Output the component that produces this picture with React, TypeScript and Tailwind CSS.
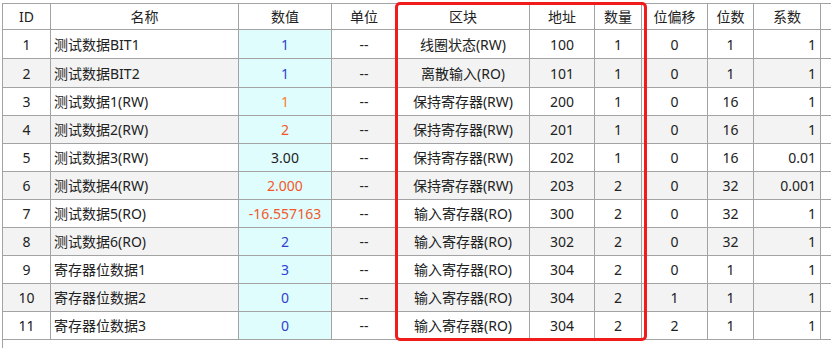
import React from 'react';

type Row = {
  id: number;
  name: string;
  value: string;
  color: string;
  block: string;
  addr: number;
  count: number;
  offset: number;
  bits: number;
  factor: string;
};

const rows: Row[] = [
  { id: 1, name: '测试数据BIT1', value: '1', color: 'text-[#2f3fd0]', block: '线圈状态(RW)', addr: 100, count: 1, offset: 0, bits: 1, factor: '1' },
  { id: 2, name: '测试数据BIT2', value: '1', color: 'text-[#2f3fd0]', block: '离散输入(RO)', addr: 101, count: 1, offset: 0, bits: 1, factor: '1' },
  { id: 3, name: '测试数据1(RW)', value: '1', color: 'text-[#f5802a]', block: '保持寄存器(RW)', addr: 200, count: 1, offset: 0, bits: 16, factor: '1' },
  { id: 4, name: '测试数据2(RW)', value: '2', color: 'text-[#f3582c]', block: '保持寄存器(RW)', addr: 201, count: 1, offset: 0, bits: 16, factor: '1' },
  { id: 5, name: '测试数据3(RW)', value: '3.00', color: 'text-[#1e1e1e]', block: '保持寄存器(RW)', addr: 202, count: 1, offset: 0, bits: 16, factor: '0.01' },
  { id: 6, name: '测试数据4(RW)', value: '2.000', color: 'text-[#f3582c]', block: '保持寄存器(RW)', addr: 203, count: 2, offset: 0, bits: 32, factor: '0.001' },
  { id: 7, name: '测试数据5(RO)', value: '-16.557163', color: 'text-[#f3582c]', block: '输入寄存器(RO)', addr: 300, count: 2, offset: 0, bits: 32, factor: '1' },
  { id: 8, name: '测试数据6(RO)', value: '2', color: 'text-[#2f3fd0]', block: '输入寄存器(RO)', addr: 302, count: 2, offset: 0, bits: 32, factor: '1' },
  { id: 9, name: '寄存器位数据1', value: '3', color: 'text-[#2f3fd0]', block: '输入寄存器(RO)', addr: 304, count: 2, offset: 0, bits: 1, factor: '1' },
  { id: 10, name: '寄存器位数据2', value: '0', color: 'text-[#2f3fd0]', block: '输入寄存器(RO)', addr: 304, count: 2, offset: 1, bits: 1, factor: '1' },
  { id: 11, name: '寄存器位数据3', value: '0', color: 'text-[#2f3fd0]', block: '输入寄存器(RO)', addr: 304, count: 2, offset: 2, bits: 1, factor: '1' },
];

const headers = ['ID', '名称', '数值', '单位', '区块', '地址', '数量', '位偏移', '位数', '系数', ''];
const widths = [48, 188, 93, 65, 133, 65, 47, 66, 46, 67, 20];

const cell = 'border-r border-b border-[#a3a3a3] p-0 whitespace-nowrap overflow-hidden';

export default function App() {
  return (
    <div
      className="relative w-[831px] h-[348px] bg-white overflow-hidden text-[14px] text-[#222222]"
      style={{ fontFamily: '"Noto Sans", "Noto Sans CJK SC", sans-serif' }}
    >
      <div className="ml-[2px] mt-[3px] h-full border-l border-t border-[#a3a3a3]">
        <table className="table-fixed border-separate border-spacing-0 w-[838px]">
          <colgroup>
            {widths.map((w, i) => (
              <col key={i} style={{ width: w }} />
            ))}
          </colgroup>
          <thead>
            <tr className="h-[26px]">
              {headers.map((h, i) => (
                <th key={i} className={`${cell} font-normal text-center bg-white`}>
                  {h}
                </th>
              ))}
            </tr>
          </thead>
          <tbody>
            {rows.map((r, i) => {
              const bg = i % 2 === 1 ? 'bg-[#f3f3f3]' : 'bg-white';
              const h = i < 2 ? 'h-[29px]' : 'h-[28px]';
              return (
                <tr key={r.id} className={`${h} ${bg}`}>
                  <td className={`${cell} text-center`}>{r.id}</td>
                  <td className={`${cell} text-left pl-[3px]`}>{r.name}</td>
                  <td className={`${cell} text-center bg-[#dffdfd] ${r.color}`}>{r.value}</td>
                  <td className={`${cell} text-center`}>--</td>
                  <td className={`${cell} text-center`}>{r.block}</td>
                  <td className={`${cell} text-center`}>{r.addr}</td>
                  <td className={`${cell} text-center`}>{r.count}</td>
                  <td className={`${cell} text-center`}>{r.offset}</td>
                  <td className={`${cell} text-center`}>{r.bits}</td>
                  <td className={`${cell} text-right pr-[4px]`}>{r.factor}</td>
                  <td className={`${cell} bg-white`}></td>
                </tr>
              );
            })}
          </tbody>
        </table>
      </div>

      {/* red annotation box */}
      <div className="absolute left-[395px] top-[2px] w-[252px] h-[339px] border-[3px] border-[#f01c1c] rounded-[5px] pointer-events-none" />
    </div>
  );
}
